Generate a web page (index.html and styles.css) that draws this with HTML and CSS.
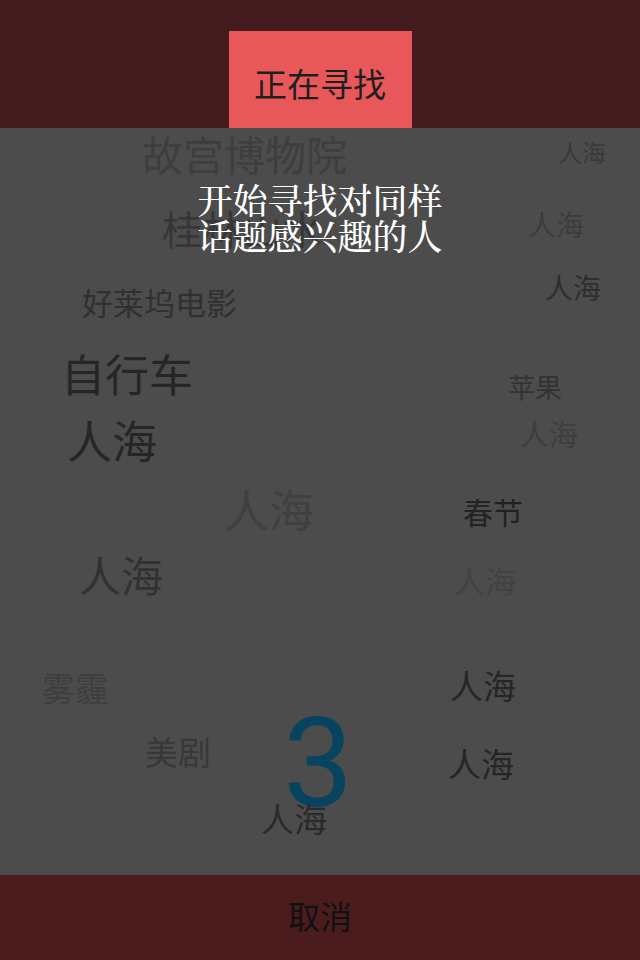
FILE: index.html
```html
<!DOCTYPE html>
<html lang="zh-CN">
<head>
<meta charset="utf-8">
<title>正在寻找</title>
<link rel="stylesheet" href="styles.css">
</head>
<body>
<div class="screen">
  <header class="top">
    <div class="searching">正在寻找</div>
  </header>
  <main class="cloud">
    <span class="w" style="left:142px;top:5px;font-size:41px;color:#3e3e3e">故宫博物院</span>
    <span class="w" style="left:558px;top:12px;font-size:24px;color:#3a3a3a">人海</span>
    <span class="w" style="left:162px;top:80px;font-size:40px;color:#363636">桂林山水</span>
    <span class="w" style="left:528px;top:82px;font-size:28px;color:#3c3c3c">人海</span>
    <span class="w" style="left:545px;top:145px;font-size:28px;color:#2e2e2e">人海</span>
    <span class="w" style="left:82px;top:158px;font-size:31px;color:#303030">好莱坞电影</span>
    <span class="w" style="left:61px;top:223px;font-size:44px;color:#262626">自行车</span>
    <span class="w" style="left:508px;top:245px;font-size:27px;color:#333333">苹果</span>
    <span class="w" style="left:67px;top:289px;font-size:45px;color:#262626">人海</span>
    <span class="w" style="left:520px;top:291px;font-size:29px;color:#3e3e3e">人海</span>
    <span class="w" style="left:224px;top:358px;font-size:45px;color:#404040">人海</span>
    <span class="w" style="left:463px;top:368px;font-size:30px;color:#222222">春节</span>
    <span class="w" style="left:79px;top:425px;font-size:42px;color:#323232">人海</span>
    <span class="w" style="left:454px;top:436px;font-size:31px;color:#424242">人海</span>
    <span class="w" style="left:42px;top:543px;font-size:33px;color:#3e3e3e">雾霾</span>
    <span class="w" style="left:450px;top:541px;font-size:33px;color:#262626">人海</span>
    <span class="w" style="left:145px;top:607px;font-size:33px;color:#383838">美剧</span>
    <span class="w" style="left:448px;top:619px;font-size:33px;color:#262626">人海</span>
    <span class="count">3</span>
    <span class="w" style="left:261px;top:674px;font-size:33px;color:#2a2a2a">人海</span>
    <div class="hint">开始寻找对同样<br>话题感兴趣的人</div>
  </main>
  <footer class="bottom">
    <div class="cancel">取消</div>
  </footer>
</div>
</body>
</html>
```

FILE: styles.css
```css
html, body {
  margin: 0;
  padding: 0;
  background: #4c4c4c;
}

.screen {
  width: 640px;
  height: 960px;
  display: flex;
  flex-direction: column;
  font-family: "Noto Sans CJK SC", "Noto Sans", sans-serif;
  overflow: hidden;
}

.top {
  height: 128px;
  flex: none;
  background: #431a1d;
  display: flex;
  justify-content: center;
  align-items: flex-end;
}

.searching {
  width: 183px;
  height: 97px;
  background: #e8585a;
  color: #1e1e1e;
  font-size: 33px;
  display: flex;
  align-items: center;
  justify-content: center;
  padding-top: 6px;
  box-sizing: border-box;
}

.cloud {
  flex: 1;
  position: relative;
  background: #4c4c4c;
}

.w {
  position: absolute;
  line-height: 1;
  white-space: nowrap;
}

.count {
  position: absolute;
  left: 283px;
  top: 573px;
  font-family: Roboto, "Liberation Sans", sans-serif;
  font-size: 125px;
  line-height: 1;
  color: #074460;
}

.hint {
  position: absolute;
  left: 0;
  right: 0;
  top: 53px;
  text-align: center;
  color: #ffffff;
  font-size: 35px;
  font-weight: 500;
  line-height: 36px;
  font-family: "Noto Serif CJK SC", "Noto Sans CJK SC", serif;
}

.bottom {
  height: 85px;
  flex: none;
  background: #4b1c1e;
  display: flex;
  align-items: center;
  justify-content: center;
  padding-bottom: 5px;
  box-sizing: border-box;
}

.cancel {
  color: #111111;
  font-size: 32px;
}
```
